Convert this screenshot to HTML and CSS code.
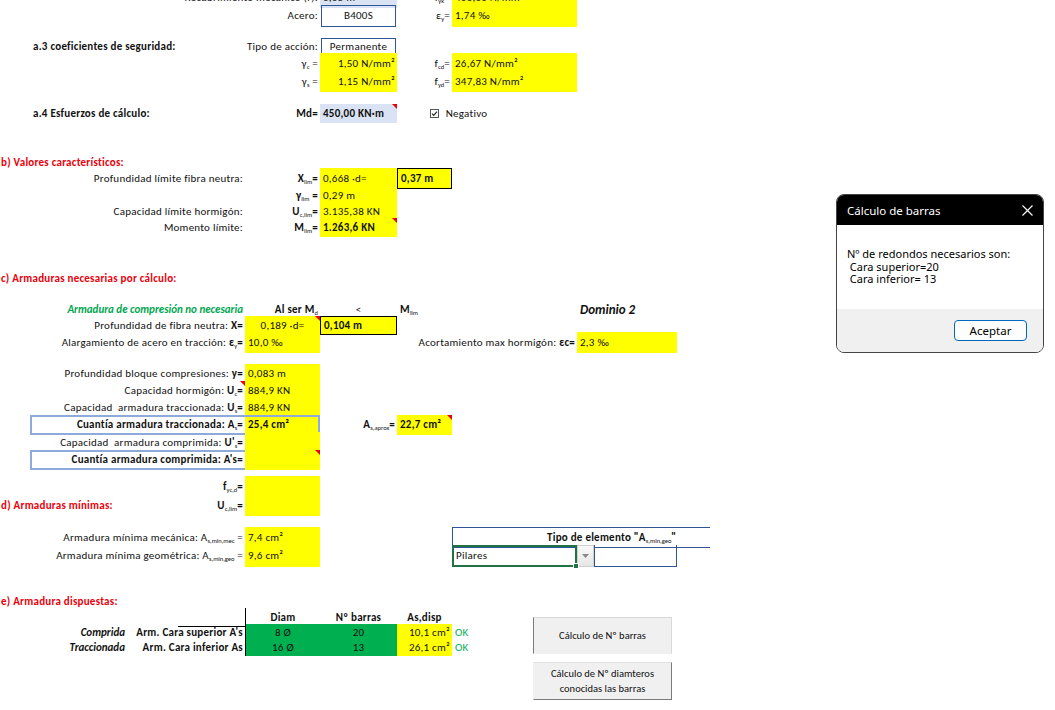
FILE: index.html
```html
<!DOCTYPE html>
<html lang="es">
<head>
<meta charset="utf-8">
<title>Cálculo de barras</title>
<link rel="stylesheet" href="styles.css">
</head>
<body>
<div class="sheet">
  <div class="r h17">
    <div class="c1-6 rt">Recubrimiento mecánico (r):</div>
    <div class="c6-7 lb lt">0,05 m</div>
    <div class="c7-8 rt">f<sub>yk</sub>=</div>
    <div class="c8-9 y lt">400,00 N/mm²</div>
  </div>
  <div class="r h19">
    <div class="c1-6 rt">Acero:</div>
    <div class="c6-7 bx ct">B400S</div>
    <div class="c7-8 rt">ε<sub>y</sub>=</div>
    <div class="c8-9 y lt">1,74 ‰</div>
  </div>
  <div class="r h14"></div>
  <div class="r h15">
    <div class="c2-5 lt b">a.3 coeficientes de seguridad:</div>
    <div class="c5-6 rt">Tipo de acción:</div>
    <div class="c6-7 bx ct">Permanente</div>
  </div>
  <div class="r h18">
    <div class="c5-6 rt">γ<sub>c</sub> =</div>
    <div class="c6-7 y rt">1,50 N/mm²</div>
    <div class="c7-8 rt">f<sub>cd</sub>=</div>
    <div class="c8-9 y lt">26,67 N/mm²</div>
  </div>
  <div class="r h18">
    <div class="c5-6 rt">γ<sub>s</sub> =</div>
    <div class="c6-7 y rt">1,15 N/mm²</div>
    <div class="c7-8 rt">f<sub>yd</sub>=</div>
    <div class="c8-9 y lt">347,83 N/mm²</div>
  </div>
  <div class="r h15"></div>
  <div class="r h16">
    <div class="c2-5 lt b">a.4 Esfuerzos de cálculo:</div>
    <div class="c5-6 rt b">Md=</div>
    <div class="c6-7 lb lt b note">450,00 KN·m</div>
    <div class="c7-9 chk">
      <svg class="cb" width="9" height="9" viewBox="0 0 9 9"><rect x="0.5" y="0.5" width="8" height="8" fill="#fff" stroke="#555"/><path d="M2 4.6 L3.7 6.3 L7 2.6" fill="none" stroke="#222" stroke-width="1.2"/></svg>
      <span>Negativo</span>
    </div>
  </div>
  <div class="r h34"></div>

  <div class="r h14">
    <div class="c1-6 red b lt1">b) Valores característicos:</div>
  </div>
  <div class="r h18">
    <div class="c1-5 rt">Profundidad límite fibra neutra:</div>
    <div class="c5-6 rt b">X<sub>lim</sub>=</div>
    <div class="c6-7 y lt">0,668 ·d=</div>
    <div class="c7-8 y kb lt b">0,37 m</div>
  </div>
  <div class="r h16">
    <div class="c5-6 rt b">γ<sub>lim</sub> =</div>
    <div class="c6-7 y lt">0,29 m</div>
  </div>
  <div class="r h16">
    <div class="c1-5 rt">Capacidad límite hormigón:</div>
    <div class="c5-6 rt b">U<sub>c,lim</sub>=</div>
    <div class="c6-7 y lt">3.135,38 KN</div>
  </div>
  <div class="r h16">
    <div class="c1-5 rt">Momento límite:</div>
    <div class="c5-6 rt b">M<sub>lim</sub>=</div>
    <div class="c6-7 y lt b note">1.263,6 KN</div>
  </div>
  <div class="r h35"></div>

  <div class="r h16">
    <div class="c1-7 red b lt1">c) Armaduras necesarias por cálculo:</div>
  </div>
  <div class="r h15"></div>
  <div class="r h16">
    <div class="c1-5 rt green b i">Armadura de compresión no necesaria</div>
    <div class="c5-6 rt b">Al ser M<sub>d</sub></div>
    <div class="c6-7 ct">&lt;</div>
    <div class="c7-8 lt b">M<sub>lim</sub></div>
    <div class="c9-11 lt b i big">Dominio 2</div>
  </div>
  <div class="r h16">
    <div class="c1-5 rt">Profundidad de fibra neutra: <b>X=</b></div>
    <div class="c5-6 y ct note">0,189 ·d=</div>
    <div class="c6-7 y kb lt b">0,104 m</div>
  </div>
  <div class="r h18">
    <div class="c1-5 rt">Alargamiento de acero en tracción: <b>ε<sub>y</sub>=</b></div>
    <div class="c5-6 y lt">10,0 ‰</div>
    <div class="c7-9 rt">Acortamiento max hormigón: <b>εc=</b></div>
    <div class="c9-10 y lt">2,3 ‰</div>
  </div>
  <div class="r h14"></div>
  <div class="r h17">
    <div class="c1-5 rt">Profundidad bloque compresiones: <b>y=</b></div>
    <div class="c5-6 y lt">0,083 m</div>
  </div>
  <div class="r h17">
    <div class="c1-5 rt note">Capacidad hormigón: <b>U<sub>c</sub>=</b></div>
    <div class="c5-6 y lt">884,9 KN</div>
  </div>
  <div class="r h17">
    <div class="c1-5 rt">Capacidad &nbsp;armadura traccionada: <b>U<sub>s</sub>=</b></div>
    <div class="c5-6 y lt">884,9 KN</div>
  </div>
  <div class="r h17">
    <div class="c1-5 rt b">Cuantía armadura traccionada: A<sub>s</sub>=</div>
    <div class="c5-6 y lt b">25,4 cm²</div>
    <div class="c2-6 frame"></div>
    <div class="c6-7 rt b">A<sub>s,aprox</sub>=</div>
    <div class="c7-8 y lt b note">22,7 cm²</div>
  </div>
  <div class="r h18">
    <div class="c1-5 rt">Capacidad &nbsp;armadura comprimida: <b>U'<sub>s</sub>=</b></div>
    <div class="c5-6 y"></div>
  </div>
  <div class="r h17">
    <div class="c1-5 rt b">Cuantía armadura comprimida: A's=</div>
    <div class="c5-6 y note"></div>
    <div class="c2-6 frame"></div>
  </div>
  <div class="r h9"></div>
  <div class="r h19">
    <div class="c1-5 rt b">f<sub>yc,d</sub>=</div>
    <div class="c5-6 y"></div>
  </div>
  <div class="r h18">
    <div class="c1-4 red b lt1">d) Armaduras mínimas:</div>
    <div class="c4-5 rt b">U<sub>c,lim</sub>=</div>
    <div class="c5-6 y"></div>
  </div>
  <div class="r h14"></div>
  <div class="r h18">
    <div class="c1-5 rt">Armadura mínima mecánica: A<sub>s,min,mec</sub> =</div>
    <div class="c5-6 y lt">7,4 cm²</div>
    <div class="c8-11 tipo b">Tipo de elemento "A<sub>s,min,geo</sub>"</div>
  </div>
  <div class="r h19">
    <div class="c1-5 rt">Armadura mínima geométrica: A<sub>s,min,geo</sub> =</div>
    <div class="c5-6 y lt">9,6 cm²</div>
    <div class="c8-9 sel">Pilares<span class="handle"></span></div>
    <div class="c9-10 dd">
      <span class="ddbtn"><svg width="7" height="4" viewBox="0 0 7 4"><path d="M0 0 H7 L3.5 4 Z" fill="#888"/></svg></span>
      <span class="ddbox"></span>
    </div>
  </div>
  <div class="r h29"></div>
  <div class="r h15">
    <div class="c1-6 red b lt1">e) Armadura dispuestas:</div>
  </div>

  <div class="ewrap">
    <div class="etable">
      <div class="re h16">
        <div class="c4-8 uline"></div>
        <div class="c5-6 ct b vl">Diam</div>
        <div class="c6-7 ct b">Nº barras</div>
        <div class="c7-8 ct b">As,disp</div>
      </div>
      <div class="re h15">
        <div class="c2-3 rt5 b i">Comprida</div>
        <div class="c3-5 rt b">Arm. Cara superior A's</div>
        <div class="c5-6 g ct vl">8 Ø</div>
        <div class="c6-7 g ct">20</div>
        <div class="c7-8 y rt">10,1 cm²</div>
        <div class="c8-9 ok">OK</div>
      </div>
      <div class="re h14">
        <div class="c2-3 rt5 b i">Traccionada</div>
        <div class="c3-5 rt b">Arm. Cara inferior As</div>
        <div class="c5-6 g ct vl">16 Ø</div>
        <div class="c6-7 g ct">13</div>
        <div class="c7-8 y rt">26,1 cm²</div>
        <div class="c8-9 ok">OK</div>
      </div>
    </div>
    <div class="buttons">
      <div class="btn btn1">Cálculo de Nº barras</div>
      <div class="btn btn2">Cálculo de Nº diamteros<br>conocidas las barras</div>
    </div>
  </div>
</div>

<div class="dialog">
  <div class="dtitle">
    <span>Cálculo de barras</span>
    <svg class="dclose" width="11" height="11" viewBox="0 0 11 11"><path d="M0.5 0.5 L10.5 10.5 M10.5 0.5 L0.5 10.5" stroke="#fff" stroke-width="1.1"/></svg>
  </div>
  <div class="dbody">Nº de redondos necesarios son:
 Cara superior=20
 Cara inferior= 13</div>
  <div class="dfoot"><span class="dbtn">Aceptar</span></div>
</div>
</body>
</html>
```

FILE: styles.css
```css
* { box-sizing: border-box; }
html, body { margin: 0; padding: 0; background: #fff; }
body {
  width: 1055px;
  height: 710px;
  overflow: hidden;
  position: relative;
  font-family: Carlito, Calibri, "Liberation Sans Narrow", Roboto, sans-serif;
  font-size: 11px;
  color: #111;
}
.sheet { margin-top: -12px; letter-spacing: 0.25px; }

.r, .re {
  display: grid;
  grid-template-columns: 30px 100px 48px 67px 75px 77px 55px 125px 100px 33px 1fr;
  height: var(--h);
}
.re { grid-template-columns: 30px 100px 48px 67px 75px 77px 55px 1fr; }
.r > *, .re > * {
  grid-row: 1;
  display: block;
  line-height: calc(var(--h) + 3px);
  white-space: nowrap;
  min-width: 0;
}

.h9 { --h: 9px; } .h14 { --h: 14px; } .h15 { --h: 15px; } .h16 { --h: 16px; }
.h17 { --h: 17px; } .h18 { --h: 18px; } .h19 { --h: 19px; } .h29 { --h: 29px; }
.h34 { --h: 34px; } .h35 { --h: 35px; }

.c1-4 { grid-column: 1 / 4; } .c1-5 { grid-column: 1 / 5; } .c1-6 { grid-column: 1 / 6; }
.c1-7 { grid-column: 1 / 7; } .c2-3 { grid-column: 2 / 3; } .c2-5 { grid-column: 2 / 5; }
.c2-6 { grid-column: 2 / 6; } .c3-5 { grid-column: 3 / 5; } .c4-5 { grid-column: 4 / 5; }
.c4-8 { grid-column: 4 / 8; } .c5-6 { grid-column: 5 / 6; } .c6-7 { grid-column: 6 / 7; }
.c7-8 { grid-column: 7 / 8; } .c7-9 { grid-column: 7 / 9; } .c8-9 { grid-column: 8 / 9; }
.c8-11 { grid-column: 8 / 11; } .c9-10 { grid-column: 9 / 10; } .c9-11 { grid-column: 9 / 11; }

.rt { text-align: right; padding-right: 2px; }
.rt5 { text-align: right; padding-right: 5px; }
.ct { text-align: center; }
.lt { padding-left: 3px; }
.lt1 { padding-left: 1px; }
.b { font-weight: bold; }
.i { font-style: italic; letter-spacing: 0; }
.big { font-size: 13px; }
.red { color: #e8000b; }
.green { color: #00a650; }

sub { font-size: 6.5px; vertical-align: -2px; line-height: 0; font-weight: normal; letter-spacing: 0; }

.y { background: #ffff00; }
.lb { background: #dae3f3; }
.g { background: #00b050; }
.bx { border: 1px solid #2f5597; margin: 0 1px; line-height: calc(var(--h) + 1px); }
.kb { border: 1px solid #000; line-height: calc(var(--h) + 1px); }
.frame { border: 2px solid #8eaadb; }

.note { position: relative; }
.note::after {
  content: "";
  position: absolute;
  top: 0;
  right: 0;
  border-top: 5px solid #e8000b;
  border-left: 5px solid transparent;
}

.chk { padding-left: 33px; }
.cb { vertical-align: -1px; margin-right: 4px; }

.tipo {
  border-top: 1px solid #2f5597;
  border-left: 1px solid #2f5597;
  border-bottom: 1px solid #2f5597;
  padding-left: 94px;
  line-height: calc(var(--h) + 1px);
}
.sel {
  position: relative;
  border: 2px solid #217346;
  padding-left: 2px;
  line-height: calc(var(--h) - 1px);
}
.handle {
  position: absolute;
  right: -4px;
  bottom: -4px;
  width: 6px;
  height: 6px;
  background: #217346;
  border: 1px solid #fff;
}
.r > .dd { display: flex; align-items: stretch; }
.ddbtn {
  width: 17px;
  display: flex;
  align-items: center;
  justify-content: center;
  background: linear-gradient(#f9f9f9, #e6e6e6);
  border: 1px solid #cfcfcf;
}
.ddbox {
  flex: 1;
  border: 1px solid #2f5597;
  border-top: none;
}

.ewrap { display: flex; align-items: flex-start; }
.etable { width: 533px; flex: none; }
.uline { border-bottom: 1px solid #000; }
.vl { border-left: 1px solid #000; }
.ok { color: #00b050; padding-left: 3px; }

.buttons {
  display: flex;
  flex-direction: column;
  gap: 8px;
  padding-top: 9px;
  letter-spacing: 0;
}
.btn {
  width: 139px;
  height: 37px;
  background: #f0f0f0;
  display: flex;
  align-items: center;
  justify-content: center;
  text-align: center;
  line-height: 15px;
  font-size: 10.5px;
  border-top: 1px solid #d8d8d8;
  border-left: 1px solid #7a7a7a;
  border-right: 1px solid #d8d8d8;
  border-bottom: 1px solid #f0f0f0;
}
.btn2 {
  height: 38px;
  border-top: 1px solid #e0e0e0;
  border-left: 1px solid #f0f0f0;
  border-right: 1px solid #7a7a7a;
  border-bottom: 1px solid #7a7a7a;
}

.dialog {
  position: absolute;
  left: 836px;
  top: 194px;
  width: 208px;
  height: 159px;
  border: 1px solid #444;
  border-radius: 8px;
  overflow: hidden;
  background: #fff;
  display: flex;
  flex-direction: column;
  font-family: "Noto Sans", "Open Sans", sans-serif;
  color: #000;
}
.dtitle {
  height: 30px;
  background: #000;
  color: #fff;
  display: flex;
  align-items: center;
  justify-content: space-between;
  padding: 0 10px;
  font-size: 11.5px;
}
.dbody {
  flex: 1;
  white-space: pre;
  padding: 23px 0 0 10px;
  font-size: 11px;
  line-height: 12.7px;
}
.dfoot {
  height: 43px;
  background: #f0f0f0;
  display: flex;
  justify-content: flex-end;
  align-items: flex-start;
  padding: 11px 16px 0 0;
}
.dbtn {
  width: 73px;
  height: 21px;
  border: 1px solid #0067c0;
  border-radius: 4px;
  background: #fdfdfd;
  display: flex;
  align-items: center;
  justify-content: center;
  font-size: 11.5px;
}
```
